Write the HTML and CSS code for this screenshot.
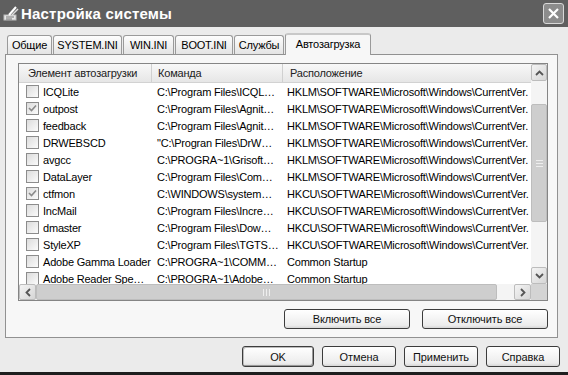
FILE: index.html
```html
<!DOCTYPE html>
<html>
<head>
  <title>Настройка системы</title>
  <link rel="stylesheet" href="styles.css">
</head>
<body>
  <div class="window">
    <div class="titlebar">
      <svg class="app-icon" width="16" height="16" viewBox="0 0 16 16">
        <rect x="1" y="9" width="12" height="5" fill="#e8e8e8" stroke="#bbb"/>
        <line x1="3" y1="11" x2="11" y2="11" stroke="#777"/>
        <line x1="3" y1="13" x2="9" y2="13" stroke="#777"/>
        <path d="M6 9 L13 1" stroke="#fff" stroke-width="2"/>
        <path d="M9 9 L15 3" stroke="#ddd" stroke-width="1.5"/>
      </svg>
      <span class="title">Настройка системы</span>
      <div class="close">
        <svg width="19" height="19" viewBox="0 0 19 19">
          <path d="M5 5 L14 14 M14 5 L5 14" stroke="#fff" stroke-width="2.2"/>
        </svg>
      </div>
    </div>

    <div class="content">
      <div class="tabs">
        <div class="tab tab-general">Общие</div>
        <div class="tab tab-system">SYSTEM.INI</div>
        <div class="tab tab-win">WIN.INI</div>
        <div class="tab tab-boot">BOOT.INI</div>
        <div class="tab tab-services">Службы</div>
        <div class="tab active">Автозагрузка</div>
      </div>

      <div class="panel">
        <div class="list">
          <div class="list-main">
            <div class="list-body">
              <div class="list-head">
                <div class="th th-name">Элемент автозагрузки</div>
                <div class="th th-cmd">Команда</div>
                <div class="th th-loc">Расположение</div>
              </div>
              <div class="rows">
                <div class="row"><div class="cell c-name"><span class="chk"></span>ICQLite</div><div class="cell c-cmd">C:\Program Files\ICQL…</div><div class="cell c-loc">HKLM\SOFTWARE\Microsoft\Windows\CurrentVer.</div></div>
                <div class="row"><div class="cell c-name"><span class="chk checked"><svg width="11" height="11" viewBox="0 0 11 11"><path d="M2 5 L4.5 7.5 L9 2.5" fill="none" stroke="#8a8a8a" stroke-width="1.6"/></svg></span>outpost</div><div class="cell c-cmd">C:\Program Files\Agnit…</div><div class="cell c-loc">HKLM\SOFTWARE\Microsoft\Windows\CurrentVer.</div></div>
                <div class="row"><div class="cell c-name"><span class="chk"></span>feedback</div><div class="cell c-cmd">C:\Program Files\Agnit…</div><div class="cell c-loc">HKLM\SOFTWARE\Microsoft\Windows\CurrentVer.</div></div>
                <div class="row"><div class="cell c-name"><span class="chk"></span>DRWEBSCD</div><div class="cell c-cmd">"C:\Progran Files\DrW…</div><div class="cell c-loc">HKLM\SOFTWARE\Microsoft\Windows\CurrentVer.</div></div>
                <div class="row"><div class="cell c-name"><span class="chk"></span>avgcc</div><div class="cell c-cmd">C:\PROGRA~1\Grisoft…</div><div class="cell c-loc">HKLM\SOFTWARE\Microsoft\Windows\CurrentVer.</div></div>
                <div class="row"><div class="cell c-name"><span class="chk"></span>DataLayer</div><div class="cell c-cmd">C:\Program Files\Com…</div><div class="cell c-loc">HKLM\SOFTWARE\Microsoft\Windows\CurrentVer.</div></div>
                <div class="row"><div class="cell c-name"><span class="chk checked"><svg width="11" height="11" viewBox="0 0 11 11"><path d="M2 5 L4.5 7.5 L9 2.5" fill="none" stroke="#8a8a8a" stroke-width="1.6"/></svg></span>ctfmon</div><div class="cell c-cmd">C:\WINDOWS\system…</div><div class="cell c-loc">HKCU\SOFTWARE\Microsoft\Windows\CurrentVer.</div></div>
                <div class="row"><div class="cell c-name"><span class="chk"></span>IncMail</div><div class="cell c-cmd">C:\Program Files\Incre…</div><div class="cell c-loc">HKCU\SOFTWARE\Microsoft\Windows\CurrentVer.</div></div>
                <div class="row"><div class="cell c-name"><span class="chk"></span>dmaster</div><div class="cell c-cmd">C:\Program Files\Dow…</div><div class="cell c-loc">HKCU\SOFTWARE\Microsoft\Windows\CurrentVer.</div></div>
                <div class="row"><div class="cell c-name"><span class="chk"></span>StyleXP</div><div class="cell c-cmd">C:\Program Files\TGTS…</div><div class="cell c-loc">HKCU\SOFTWARE\Microsoft\Windows\CurrentVer.</div></div>
                <div class="row"><div class="cell c-name"><span class="chk"></span>Adobe Gamma Loader</div><div class="cell c-cmd">C:\PROGRA~1\COMM…</div><div class="cell c-loc">Common Startup</div></div>
                <div class="row"><div class="cell c-name"><span class="chk"></span>Adobe Reader Spe…</div><div class="cell c-cmd">C:\PROGRA~1\Adobe…</div><div class="cell c-loc">Common Startup</div></div>
              </div>
            </div>
            <div class="vscroll">
              <div class="sb-btn v"><svg width="9" height="6" viewBox="0 0 9 6"><path d="M1 5 L4.5 1.5 L8 5" fill="none" stroke="#555" stroke-width="1.8"/></svg></div>
              <div class="sb-thumb v"><span class="grip-h"></span></div>
              <div class="sb-btn v down"><svg width="9" height="6" viewBox="0 0 9 6"><path d="M1 1 L4.5 4.5 L8 1" fill="none" stroke="#555" stroke-width="1.8"/></svg></div>
            </div>
          </div>
          <div class="hscroll-row">
            <div class="hscroll">
              <div class="sb-btn h"><svg width="6" height="9" viewBox="0 0 6 9"><path d="M5 1 L1.5 4.5 L5 8" fill="none" stroke="#555" stroke-width="1.8"/></svg></div>
              <div class="sb-thumb h"><span class="grip-v"></span></div>
              <div class="sb-btn h right"><svg width="6" height="9" viewBox="0 0 6 9"><path d="M1 1 L4.5 4.5 L1 8" fill="none" stroke="#555" stroke-width="1.8"/></svg></div>
            </div>
            <div class="corner"></div>
          </div>
        </div>

        <div class="panel-buttons">
          <button class="btn wide">Включить все</button>
          <button class="btn wide">Отключить все</button>
        </div>
      </div>

      <div class="dialog-buttons">
        <button class="btn default">OK</button>
        <button class="btn">Отмена</button>
        <button class="btn">Применить</button>
        <button class="btn">Справка</button>
      </div>
    </div>
  </div>
</body>
</html>
```

FILE: styles.css
```css
body { margin: 0; background: #ebebeb; }
.window { width: 568px; height: 375px; box-sizing: border-box; background: #ebebeb; border-bottom: 3px solid #1e1e1e; display: flex; flex-direction: column; font: 11px "Liberation Sans", Arial, sans-serif; letter-spacing: -0.2px; color: #000; overflow: hidden; }

.titlebar { height: 27px; flex: none; background: #5f5f5f; display: flex; align-items: center; padding: 0 4px 0 3px; color: #fff; }
.app-icon { flex: none; }
.title { flex: 1; margin-left: 2px; font-weight: bold; font-size: 15px; letter-spacing: 0.2px; }
.close { width: 21px; height: 21px; box-sizing: border-box; border: 1px solid #d8d8d8; border-radius: 3px; background: #8c8c8c; display: flex; align-items: center; justify-content: center; }

.content { flex: 1; display: flex; flex-direction: column; padding: 6px 8px 0 5px; }

.tabs { display: flex; align-items: flex-end; height: 21px; padding-left: 2px; position: relative; z-index: 1; }
.tab { height: 19px; box-sizing: border-box; margin-right: 1px; border: 1px solid #9a9a9a; border-bottom: none; border-radius: 3px 3px 0 0; background: linear-gradient(#fdfdfd, #e4e4e4); display: flex; align-items: center; justify-content: center; white-space: nowrap; }
.tab-general { width: 45px; }
.tab-system { width: 69px; }
.tab-win { width: 51px; }
.tab-boot { width: 58px; }
.tab-services { width: 50px; }
.tab.active { width: 86px; height: 22px; margin-bottom: -1px; padding-bottom: 2px; background: #f7f7f7; border-top: 2px solid #c8c8c8; }

.panel { height: 284px; box-sizing: border-box; margin-right: 2px; border: 1px solid #919191; background: #f7f7f7; padding: 8px 9px 0 12px; }

.list { height: 238px; box-sizing: border-box; border: 1px solid #858585; background: #fff; display: flex; flex-direction: column; }
.list-main { flex: 1; display: flex; min-height: 0; }
.list-body { flex: 1; display: flex; flex-direction: column; overflow: hidden; }
.list-head { height: 19px; flex: none; display: grid; grid-template-columns: 133px 131px 248px; background: linear-gradient(#f8f8f8, #e6e6e6); border-bottom: 1px solid #d2d2d2; box-sizing: border-box; }
.th { display: flex; align-items: center; border-right: 1px solid #d0d0d0; color: #222; white-space: nowrap; }
.th-name { padding-left: 9px; }
.th-cmd { padding-left: 6px; }
.th-loc { padding-left: 7px; border-right: none; }

.rows { flex: 1; overflow: hidden; }
.row { height: 17px; display: grid; grid-template-columns: 133px 131px 248px; }
.cell { display: flex; align-items: center; white-space: nowrap; overflow: hidden; }
.c-name { padding-left: 7px; }
.c-cmd { padding-left: 5px; }
.c-loc { padding-left: 4px; }
.chk { width: 13px; height: 13px; box-sizing: border-box; flex: none; margin-right: 4px; border: 1px solid #8c8c8c; background: linear-gradient(135deg, #dcdcdc, #fbfbfb); display: flex; align-items: center; justify-content: center; }

.vscroll { width: 16px; flex: none; background: #f4f4f4; display: flex; flex-direction: column; }
.sb-btn { box-sizing: border-box; border: 1px solid #bcbcbc; border-radius: 2px; background: linear-gradient(135deg, #f4f4f4, #d6d6d6); display: flex; align-items: center; justify-content: center; flex: none; }
.sb-btn.v { height: 17px; }
.sb-btn.down { margin-top: auto; }
.sb-thumb { box-sizing: border-box; border: 1px solid #bdbdbd; border-radius: 2px; background: #cecece; display: flex; align-items: center; justify-content: center; }
.sb-thumb.v { height: 118px; margin-top: 23px; }
.grip-h { width: 7px; height: 5px; border-top: 1px solid #eee; border-bottom: 1px solid #eee; position: relative; }
.grip-h::after { content: ""; position: absolute; left: 0; right: 0; top: 2px; border-top: 1px solid #eee; }

.hscroll-row { height: 16px; flex: none; display: flex; }
.hscroll { flex: 1; display: flex; background: #f4f4f4; }
.sb-btn.h { width: 17px; }
.sb-btn.right { margin-left: auto; }
.sb-thumb.h { width: 461px; }
.grip-v { width: 5px; height: 7px; border-left: 1px solid #eee; border-right: 1px solid #eee; position: relative; }
.grip-v::after { content: ""; position: absolute; top: 0; bottom: 0; left: 2px; border-left: 1px solid #eee; }
.corner { width: 16px; background: #d4d4d4; }

.panel-buttons { display: flex; justify-content: flex-end; gap: 12px; margin-top: 8px; }
.btn { height: 21px; width: 74px; box-sizing: border-box; padding: 0; border: 1px solid #3c3c3c; border-radius: 3px; background: linear-gradient(#ffffff, #ececec 85%, #d6d6d6); font: 400 11px "Liberation Sans", Arial, sans-serif; letter-spacing: -0.1px; color: #111; }
.btn.wide { width: 126px; height: 20px; }
.btn.default { width: 72px; box-shadow: inset -1px -1px 0 #999, inset 1px 1px 0 #bbb; }

.dialog-buttons { display: flex; justify-content: flex-end; gap: 8px; margin-top: 8px; }
```
